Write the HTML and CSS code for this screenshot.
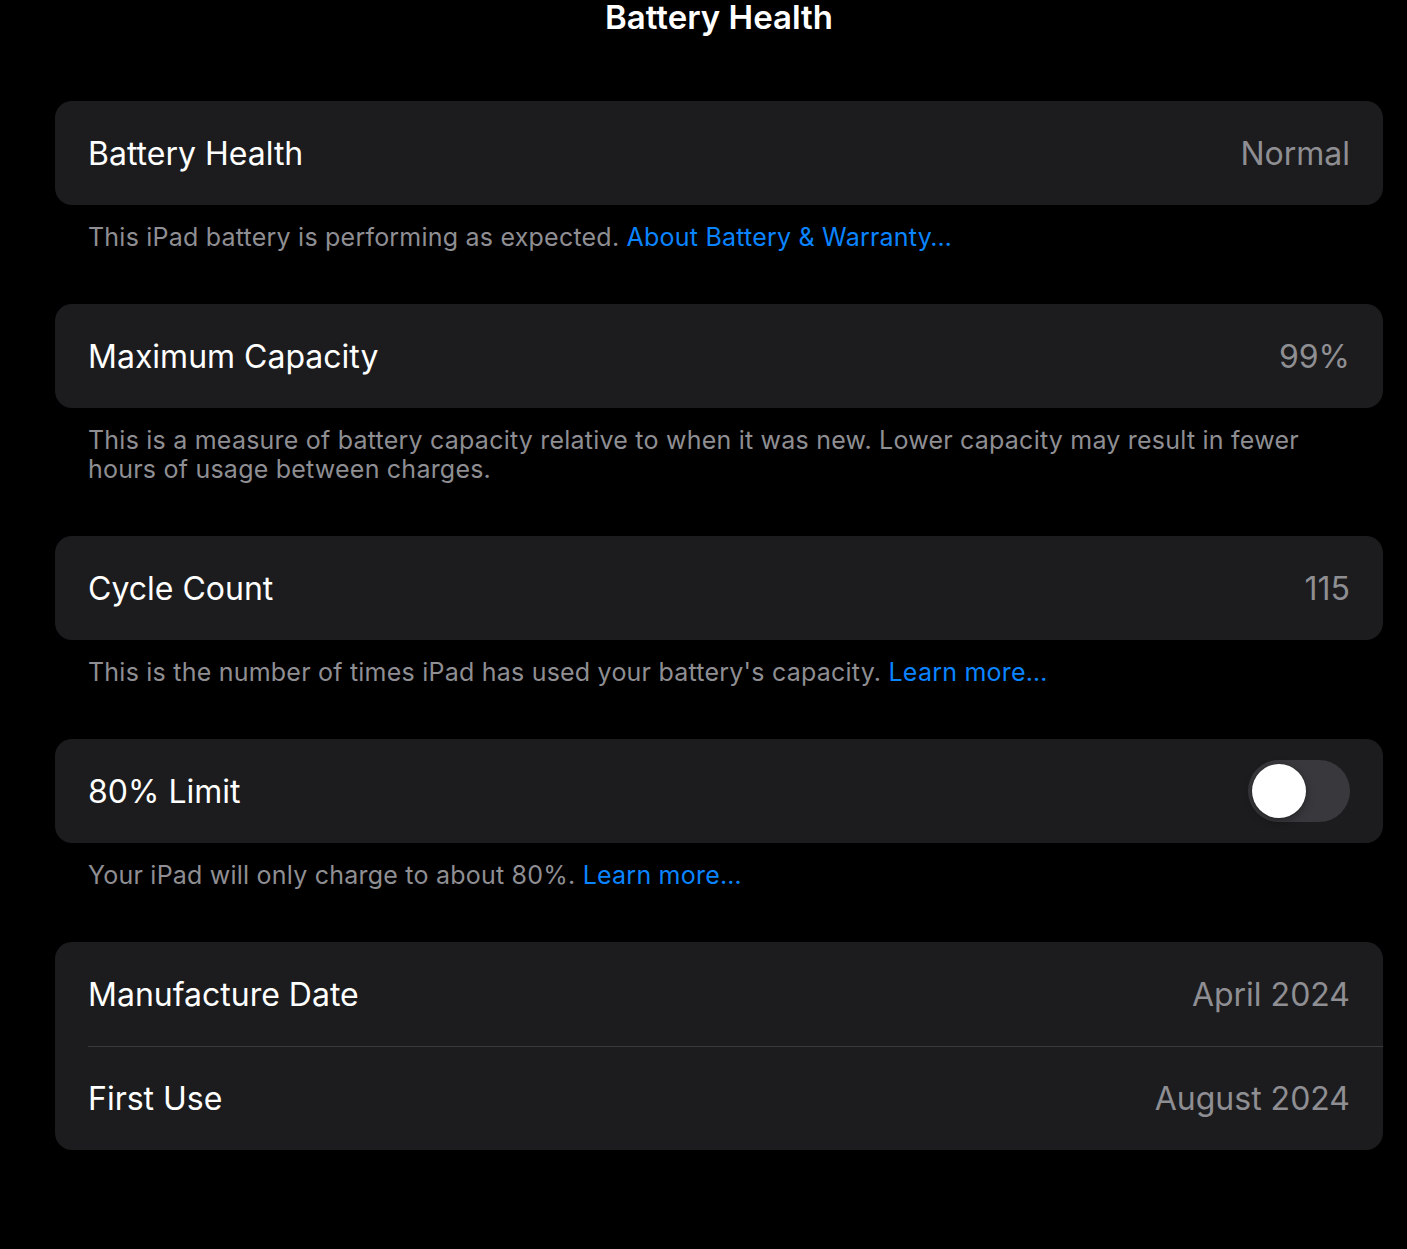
FILE: index.html
```html
<!DOCTYPE html>
<html lang="en">
<head>
<meta charset="utf-8">
<title>Battery Health</title>
<link rel="stylesheet" href="styles.css">
</head>
<body>
<div class="page">
  <header class="nav"><h1 class="nav-title">Battery Health</h1></header>

  <section class="group">
    <div class="card">
      <div class="row"><span class="label">Battery Health</span><span class="value">Normal</span></div>
    </div>
    <p class="footer">This iPad battery is performing as expected. <a class="link">About Battery &amp; Warranty…</a></p>
  </section>

  <section class="group">
    <div class="card">
      <div class="row"><span class="label">Maximum Capacity</span><span class="value">99%</span></div>
    </div>
    <p class="footer">This is a measure of battery capacity relative to when it was new. Lower capacity may result in fewer hours of usage between charges.</p>
  </section>

  <section class="group">
    <div class="card">
      <div class="row"><span class="label">Cycle Count</span><span class="value">115</span></div>
    </div>
    <p class="footer">This is the number of times iPad has used your battery's capacity. <a class="link">Learn more…</a></p>
  </section>

  <section class="group">
    <div class="card">
      <div class="row"><span class="label">80% Limit</span><span class="toggle"><span class="knob"></span></span></div>
    </div>
    <p class="footer">Your iPad will only charge to about 80%. <a class="link">Learn more…</a></p>
  </section>

  <section class="group">
    <div class="card">
      <div class="row"><span class="label">Manufacture Date</span><span class="value">April 2024</span></div>
      <div class="row row-sep"><span class="label">First Use</span><span class="value">August 2024</span></div>
    </div>
  </section>
</div>
</body>
</html>
```

FILE: styles.css
```css
html, body {
  margin: 0;
  padding: 0;
  background: #000;
}
body {
  font-family: Inter, "Noto Sans", sans-serif;
  color: #fff;
  -webkit-font-smoothing: antialiased;
}
.page {
  padding: 0 24px 0 55px;
}
.nav {
  height: 34px;
  display: flex;
  align-items: center;
  justify-content: center;
  margin-bottom: 67px;
}
.nav-title {
  margin: 0;
  font-size: 33px;
  font-weight: 600;
  line-height: 34px;
  letter-spacing: 0;
}
.group {
  margin-bottom: 52px;
}
.card {
  background: #1c1c1e;
  border-radius: 17px;
  overflow: hidden;
}
.row {
  height: 104px;
  display: flex;
  align-items: center;
  justify-content: space-between;
  padding: 0 33px;
  position: relative;
}
.row-sep::before {
  content: "";
  position: absolute;
  left: 33px;
  right: 0;
  top: 0;
  height: 1px;
  background: #3a3a3c;
}
.label {
  font-size: 32px;
  letter-spacing: 0;
}
.value {
  font-size: 32px;
  color: #8e8e93;
  letter-spacing: 0;
}
.footer {
  margin: 0;
  padding: 18px 33px 0;
  font-size: 25px;
  line-height: 29px;
  color: #8e8e93;
  letter-spacing: 0.22px;
}
.link {
  color: #0a84ff;
  text-decoration: none;
}
.toggle {
  width: 102px;
  height: 62px;
  border-radius: 31px;
  background: #39393d;
  position: relative;
  flex: none;
}
.knob {
  position: absolute;
  left: 4px;
  top: 4px;
  width: 54px;
  height: 54px;
  border-radius: 50%;
  background: #fff;
  box-shadow: 0 3px 8px rgba(0, 0, 0, 0.35), 0 0 0 1px rgba(0, 0, 0, 0.04);
}
```
